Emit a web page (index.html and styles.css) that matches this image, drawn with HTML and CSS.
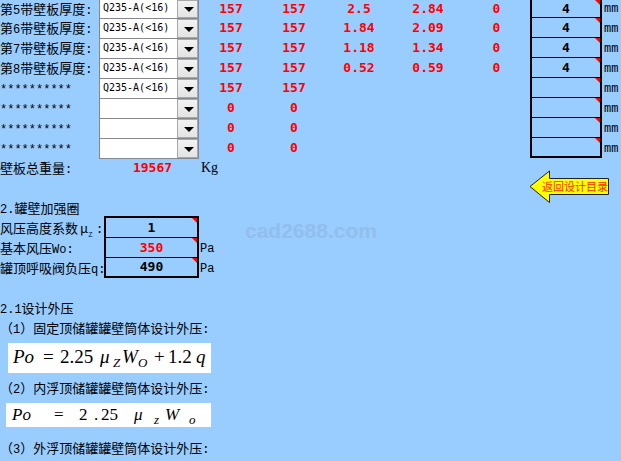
FILE: index.html
```html
<!DOCTYPE html>
<html lang="zh-CN">
<head>
<meta charset="utf-8">
<title>罐壁加强圈</title>
<link rel="stylesheet" href="styles.css">
</head>
<body>
<main class="sheet">
  <table class="plates">
    <colgroup>
      <col class="c-label"><col class="c-select"><col class="c-a"><col class="c-b"><col class="c-c"><col class="c-d"><col class="c-e"><col class="c-box"><col>
    </colgroup>
    <tbody>
      <tr><th><label for="m5" id="l5">第<span class="n">5</span>带壁板厚度<span class="n">:</span></label></th><td><div class="combo"><select id="m5"><option>Q235-A(&lt;16)</option></select></div></td><td class="red">157</td><td class="red">157</td><td class="red">2.5</td><td class="red">2.84</td><td class="red">0</td><td class="box"><input aria-labelledby="l5" value="4"></td><td class="unit">mm</td></tr>
      <tr><th><label for="m6" id="l6">第<span class="n">6</span>带壁板厚度<span class="n">:</span></label></th><td><div class="combo"><select id="m6"><option>Q235-A(&lt;16)</option></select></div></td><td class="red">157</td><td class="red">157</td><td class="red">1.84</td><td class="red">2.09</td><td class="red">0</td><td class="box"><input aria-labelledby="l6" value="4"></td><td class="unit">mm</td></tr>
      <tr><th><label for="m7" id="l7">第<span class="n">7</span>带壁板厚度<span class="n">:</span></label></th><td><div class="combo"><select id="m7"><option>Q235-A(&lt;16)</option></select></div></td><td class="red">157</td><td class="red">157</td><td class="red">1.18</td><td class="red">1.34</td><td class="red">0</td><td class="box"><input aria-labelledby="l7" value="4"></td><td class="unit">mm</td></tr>
      <tr><th><label for="m8" id="l8">第<span class="n">8</span>带壁板厚度<span class="n">:</span></label></th><td><div class="combo"><select id="m8"><option>Q235-A(&lt;16)</option></select></div></td><td class="red">157</td><td class="red">157</td><td class="red">0.52</td><td class="red">0.59</td><td class="red">0</td><td class="box"><input aria-labelledby="l8" value="4"></td><td class="unit">mm</td></tr>
      <tr><th><label for="m9" id="l9"><span class="n">**********</span></label></th><td><div class="combo"><select id="m9"><option>Q235-A(&lt;16)</option></select></div></td><td class="red">157</td><td class="red">157</td><td></td><td></td><td></td><td class="box"><input aria-labelledby="l9"></td><td class="unit">mm</td></tr>
      <tr><th><label for="m10" id="l10"><span class="n">**********</span></label></th><td><div class="combo"><select id="m10"><option></option></select></div></td><td class="red">0</td><td class="red">0</td><td></td><td></td><td></td><td class="box"><input aria-labelledby="l10"></td><td class="unit">mm</td></tr>
      <tr><th><label for="m11" id="l11"><span class="n">**********</span></label></th><td><div class="combo"><select id="m11"><option></option></select></div></td><td class="red">0</td><td class="red">0</td><td></td><td></td><td></td><td class="box"><input aria-labelledby="l11"></td><td class="unit">mm</td></tr>
      <tr><th><label for="m12" id="l12"><span class="n">**********</span></label></th><td><div class="combo"><select id="m12"><option></option></select></div></td><td class="red">0</td><td class="red">0</td><td></td><td></td><td></td><td class="box"><input aria-labelledby="l12"></td><td class="unit">mm</td></tr>
    </tbody>
  </table>

  <div class="summary">
    <div class="total">
      <span>壁板总重量<span class="n">:</span></span>
      <output class="red">19567</output>
      <span class="kg">Kg</span>
    </div>
    <a class="back" href="#contents">
      <svg viewBox="0 0 81 34" aria-hidden="true"><path d="M1 16.5 20.5 1v7.5h59v16h-59V32.5z"/></svg>
      <span>返回设计目录</span>
    </a>
  </div>

  <h2><span class="n">2.</span>罐壁加强圈</h2>
  <table class="ring">
    <colgroup><col class="c-ring"><col class="c-value"><col></colgroup>
    <tbody>
      <tr><th><label for="mu">风压高度系数<span class="mu">μ<sub>z</sub></span><span class="n">:</span></label></th><td class="box"><input id="mu" value="1"></td><td></td></tr>
      <tr><th><label for="wo">基本风压<span class="n">Wo:</span></label></th><td class="box red"><input id="wo" value="350"></td><td class="unit">Pa</td></tr>
      <tr><th><label for="q">罐顶呼吸阀负压<span class="n">q:</span></label></th><td class="box"><input id="q" value="490"></td><td class="unit">Pa</td></tr>
    </tbody>
  </table>

  <h3><span class="n">2.1</span>设计外压</h3>
  <p>（<span class="n">1</span>）固定顶储罐罐壁筒体设计外压<span class="n">:</span></p>
  <div class="formula fixed">
    <i>Po</i><span>=</span><span>2.25</span><i>μ</i><i class="low">Z</i><i>W</i><i class="low">O</i><span>+</span><span>1.2</span><i>q</i>
  </div>
  <p>（<span class="n">2</span>）内浮顶储罐罐壁筒体设计外压<span class="n">:</span></p>
  <div class="formula floating">
    <i>Po</i><span>=</span><span>2</span><span>.</span><span>25</span><i>μ</i><i class="low">z</i><i>W</i><i class="low">o</i>
  </div>
  <p>（<span class="n">3</span>）外浮顶储罐罐壁筒体设计外压<span class="n">:</span></p>
  <div class="watermark">cad2688.com</div>
</main>
</body>
</html>
```

FILE: styles.css
```css
* { box-sizing: border-box; }

body {
  margin: 0;
  background: #99ccff;
  color: #000;
  font: 13px/20px "Noto Sans CJK SC", sans-serif;
  overflow: hidden;
}

.sheet { position: relative; }

table {
  width: 100%;
  table-layout: fixed;
  border-collapse: separate;
  border-spacing: 0;
}

th, td {
  height: 20px;
  padding: 0;
  text-align: center;
  vertical-align: bottom;
  white-space: nowrap;
}

th { font-weight: normal; text-align: left; }
th label, .total, p, h2, h3 { display: block; height: 20px; line-height: 20px; }
h2, h3, p { margin: 0; font-size: 13px; font-weight: normal; white-space: nowrap; }

.n, .unit { font-family: "Liberation Mono", monospace; font-size: 12px; }
.unit { padding: 2px 0 0 1px; line-height: 18px; text-align: left; }
.plates .unit { padding-left: 2px; }

.c-label { width: 99px; }
.c-select { width: 100px; }
.c-a { width: 64px; }
.c-b { width: 62px; }
.c-c { width: 68px; }
.c-d { width: 70px; }
.c-e { width: 67px; }
.c-box { width: 72px; }
.c-ring { width: 104px; }
.c-value { width: 95px; }

.red, .box input {
  font: bold 13px/20px "DejaVu Sans Mono", monospace;
}
.red, .red input { color: #f00; }

.combo {
  position: relative;
  height: 21px;
  margin-bottom: -1px;
  border: 1px solid #848890;
  background: #fff;
}
.combo select {
  display: block;
  width: 100%;
  height: 100%;
  padding: 0 20px 2px 3px;
  border: 0;
  appearance: none;
  background: transparent;
  color: #000;
  font: 10px/16px "DejaVu Sans Mono", monospace;
}
.combo::before, .combo::after {
  content: "";
  position: absolute;
  pointer-events: none;
}
.combo::before {
  top: 0;
  right: 0;
  bottom: 0;
  width: 19px;
  border: 1px solid #a8a8a8;
  background: linear-gradient(#f2f2f2, #e4e4e4);
}
.combo::after {
  bottom: 6px;
  right: 4px;
  width: 10px;
  height: 5px;
  background: #000;
  clip-path: polygon(0 0, 100% 0, 50% 100%);
}

.box {
  position: relative;
  border: solid #000;
  border-width: 0 2px 1px;
}
.box::after {
  content: "";
  position: absolute;
  top: 0;
  right: 0;
  width: 5px;
  height: 5px;
  background: #f00;
  clip-path: polygon(0 0, 100% 0, 100% 100%);
}
tr:last-child .box { border-bottom-width: 2px; }
.box input {
  display: block;
  width: 100%;
  height: 18px;
  padding: 0;
  border: 0;
  background: transparent;
  text-align: center;
}

/* The sheet is scrolled, so its first visible row is shorter. */
.plates tr:first-child > *, .plates tr:first-child label { height: 18px; line-height: 18px; }
.plates tr:first-child .unit { padding-top: 0; }
.plates tr:first-child .combo { height: 19px; border-top: 0; }
.plates tr:first-child .box input { height: 17px; }

.summary {
  display: flex;
  justify-content: space-between;
  height: 40px;
  padding-right: 11px;
}
.total {
  display: grid;
  grid-template-columns: 104px 97px auto;
}
.total output { text-align: center; }
.kg { font: 14px/20px "Liberation Serif", serif; }

.back {
  position: relative;
  width: 81px;
  height: 34px;
  margin-top: 12px;
  color: #ff2a00;
  font-size: 11px;
  line-height: 33px;
  text-decoration: none;
  text-align: right;
  white-space: nowrap;
}
.back svg { position: absolute; inset: 0; fill: #ff0; stroke: #222; }
.back span { position: relative; padding-right: 2px; }

h2 { margin-bottom: -2px; }
.ring tr:first-child td { height: 22px; }
.ring tr:first-child .box { border-top-width: 2px; }
.mu { display: inline-block; padding-left: 2px; width: 18px; }
.mu sub { color: #247; font-size: 9px; line-height: 0; }
.ring { margin-bottom: 20px; }

.formula {
  display: grid;
  align-items: baseline;
  width: max-content;
  background: #fff;
  font-family: "Liberation Serif", serif;
  white-space: nowrap;
}
.formula .low { position: relative; top: 4px; font-size: 13px; }
.fixed {
  grid-template-columns: 30px 17px 40px 13px 9px 16px 16px 14px 28px 15px;
  height: 30px;
  margin: 5px 0 5px 8px;
  padding-left: 5px;
  font-size: 19px;
  line-height: 27px;
}
.floating {
  grid-template-columns: 42px 25px 15px 7px 33px 20px 11px 24px 22px;
  height: 24px;
  margin: 5px 0 11px 6px;
  padding-left: 6px;
  font-size: 17px;
  line-height: 24px;
}

.watermark {
  position: absolute;
  top: 219px;
  left: 245px;
  color: #92beed;
  font: bold 21px/24px "Liberation Sans", sans-serif;
  pointer-events: none;
}
```
